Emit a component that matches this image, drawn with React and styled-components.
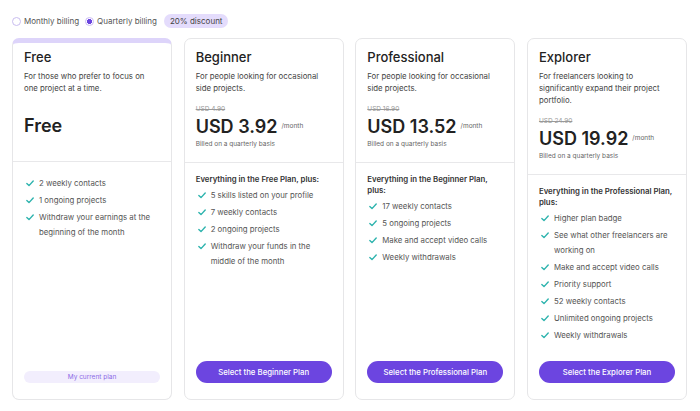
import styled, { createGlobalStyle } from 'styled-components';

const plans = [
	{
		name: 'Free',
		desc: 'For those who prefer to focus on one project at a time.',
		price: 'Free',
		features: ['2 weekly contacts', '1 ongoing projects', 'Withdraw your earnings at the beginning of the month'],
		current: true,
	},
	{
		name: 'Beginner',
		desc: 'For people looking for occasional side projects.',
		old: 'USD 4.90',
		price: 'USD 3.92',
		heading: 'Everything in the Free Plan, plus:',
		features: ['5 skills listed on your profile', '7 weekly contacts', '2 ongoing projects', 'Withdraw your funds in the middle of the month'],
		button: 'Select the Beginner Plan',
	},
	{
		name: 'Professional',
		desc: 'For people looking for occasional side projects.',
		old: 'USD 16.90',
		price: 'USD 13.52',
		heading: 'Everything in the Beginner Plan, plus:',
		features: ['17 weekly contacts', '5 ongoing projects', 'Make and accept video calls', 'Weekly withdrawals'],
		button: 'Select the Professional Plan',
	},
	{
		name: 'Explorer',
		desc: 'For freelancers looking to significantly expand their project portfolio.',
		old: 'USD 24.90',
		price: 'USD 19.92',
		heading: 'Everything in the Professional Plan, plus:',
		features: ['Higher plan badge', 'See what other freelancers are working on', 'Make and accept video calls', 'Priority support', '52 weekly contacts', 'Unlimited ongoing projects', 'Weekly withdrawals'],
		button: 'Select the Explorer Plan',
	},
];

const Check = () => (
	<svg width="8" height="7" viewBox="0 0 8 7" fill="none">
		<path d="M0.8 3.6 L3 5.6 L7.2 1" stroke="#2cb3ad" strokeWidth="1.4" strokeLinecap="round" strokeLinejoin="round" />
	</svg>
);

const App = () => {
	return (
		<>
			<GlobalStyle />
			<Page>
				<Billing>
					<Option>
						<Radio />
						Monthly billing
					</Option>
					<Option>
						<Radio $checked />
						Quarterly billing
					</Option>
					<Discount>20% discount</Discount>
				</Billing>
				<Cards>
					{plans.map((plan) => (
						<Card key={plan.name} $current={plan.current}>
							<Header $current={plan.current}>
								<Title>{plan.name}</Title>
								<Desc>{plan.desc}</Desc>
								<OldPrice>{plan.old}</OldPrice>
								<Price>
									{plan.price}
									{plan.old && <span className="per">/month</span>}
								</Price>
								<Billed>{plan.old ? 'Billed on a quarterly basis' : ''}</Billed>
							</Header>
							<Body $plain={!plan.heading}>
								{plan.heading && <ListHeading>{plan.heading}</ListHeading>}
								<List>
									{plan.features.map((f) => (
										<Item key={f}>
											<span className="icon"><Check /></span>
											<span>{f}</span>
										</Item>
									))}
								</List>
							</Body>
							<Footer>
								{plan.current ? <CurrentPlan>My current plan</CurrentPlan> : <SelectButton>{plan.button}</SelectButton>}
							</Footer>
						</Card>
					))}
				</Cards>
			</Page>
		</>
	);
};

export default App;

const GlobalStyle = createGlobalStyle`
	body{
		margin: 0;
		background: #fff;
		font-family: Inter, "Open Sans", sans-serif;
		color: #333;
	}
`;

const Page = styled.div`
	width: 700px;
	padding: 8px 13px 0 12px;
	box-sizing: border-box;
`;

const Billing = styled.div`
	display: flex;
	align-items: center;
	height: 26px;
	gap: 6px;
	margin-bottom: 4px;
`;

const Option = styled.label`
	display: flex;
	align-items: center;
	gap: 3px;
	font-size: 8px;
	color: #555;
`;

const Radio = styled.span`
	width: 9px;
	height: 9px;
	border-radius: 50%;
	box-sizing: border-box;
	border: 1px solid ${(p) => (p.$checked ? '#cbbcf6' : '#c9bdf0')};
	background: ${(p) => (p.$checked ? 'radial-gradient(circle, #6a45df 0 2.3px, #fff 2.6px)' : '#fff')};
`;

const Discount = styled.span`
	background: #e4dcfc;
	color: #444;
	font-size: 8px;
	line-height: 10px;
	padding: 2px 6px;
	border-radius: 7px;
	margin-left: 1px;
`;

const Cards = styled.div`
	display: grid;
	grid-template-columns: repeat(4, 160px);
	justify-content: space-between;
	align-items: stretch;
`;

const Card = styled.div`
	display: flex;
	flex-direction: column;
	border: 1px solid #e6e6e8;
	border-top: ${(p) => (p.$current ? '5px solid #ddd4fa' : '1px solid #e6e6e8')};
	border-radius: 7px;
	background: #fff;
	box-sizing: border-box;
`;

const Header = styled.div`
	padding: ${(p) => (p.$current ? '6px' : '10px')} 11px 13px 11px;
	border-bottom: 1px solid #e8e8ea;
`;

const Title = styled.div`
	font-size: 13px;
	font-weight: 500;
	line-height: 16px;
	color: #222;
`;

const Desc = styled.div`
	font-size: 7.8px;
	line-height: 12px;
	color: #444;
	margin-top: 5px;
	margin-bottom: 10px;
`;

const OldPrice = styled.div`
	font-size: 6.5px;
	line-height: 10px;
	height: 10px;
	color: #999;
	text-decoration: line-through;
`;

const Price = styled.div`
	font-size: 18px;
	font-weight: 600;
	line-height: 24px;
	color: #222;

	.per{
		font-size: 6.5px;
		font-weight: 400;
		color: #666;
		margin-left: 4px;
		vertical-align: 5px;
	}
`;

const Billed = styled.div`
	font-size: 6.5px;
	line-height: 10px;
	height: 10px;
	color: #666;
`;

const Body = styled.div`
	padding: ${(p) => (p.$plain ? '14px' : '11px')} 11px 0 11px;
`;

const ListHeading = styled.div`
	font-size: 7.8px;
	font-weight: 600;
	line-height: 11px;
	color: #333;
	margin-bottom: 3px;
`;

const List = styled.ul`
	list-style: none;
	margin: 0;
	padding: 0;
	display: flex;
	flex-direction: column;
	gap: 2px;
`;

const Item = styled.li`
	display: flex;
	gap: 5px;
	font-size: 7.8px;
	line-height: 15px;
	color: #555;

	.icon{
		flex: none;
		display: flex;
		align-items: center;
		height: 15px;
		padding-left: 2px;
	}
`;

const Footer = styled.div`
	margin-top: auto;
	padding: 18px 11px 16px 11px;
	height: 22px;
	display: flex;
	align-items: flex-end;
`;

const SelectButton = styled.button`
	width: 100%;
	height: 22px;
	border: none;
	border-radius: 11px;
	background: #6c45e0;
	color: #fff;
	font-family: inherit;
	font-size: 7.8px;
	font-weight: 500;
	cursor: pointer;
`;

const CurrentPlan = styled.div`
	width: 100%;
	height: 12px;
	border-radius: 6px;
	background: #f2eefd;
	color: #8a6ae6;
	font-size: 6.5px;
	line-height: 12px;
	text-align: center;
`;
